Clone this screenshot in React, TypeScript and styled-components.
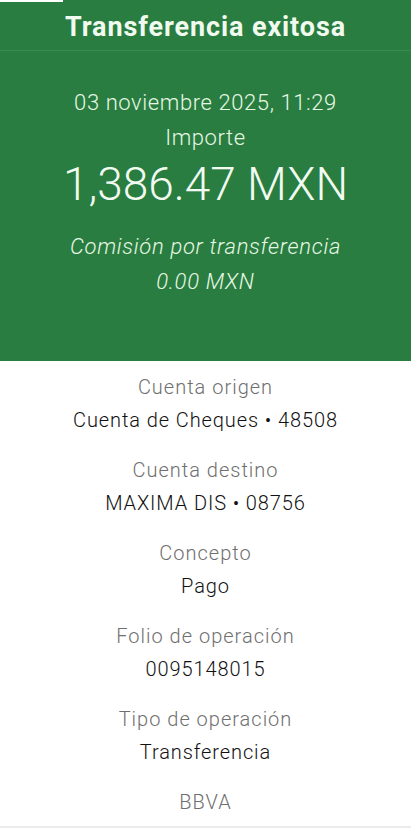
import React, { FC } from 'react';
import styled, { createGlobalStyle } from 'styled-components';

const GlobalStyle = createGlobalStyle`
  html, body {
    margin: 0;
    padding: 0;
    background: #ffffff;
  }
  body {
    font-family: 'Roboto', 'Liberation Sans', sans-serif;
  }
`;

const Screen = styled.div`
  width: 411px;
  height: 828px;
  display: flex;
  flex-direction: column;
  background: #ffffff;
  overflow: hidden;
`;

const Hero = styled.div`
  position: relative;
  display: flex;
  flex-direction: column;
  align-items: center;
  background: #2a7d40;
  color: #e6f8e4;
  padding-bottom: 62px;
`;

const StatusNub = styled.div`
  position: absolute;
  top: 0;
  left: 0;
  width: 63px;
  height: 2px;
  background: #ffffff;
`;

const TitleBar = styled.div`
  align-self: stretch;
  height: 51px;
  display: flex;
  justify-content: center;
  align-items: center;
  padding-top: 4px;
  box-sizing: border-box;
  border-bottom: 1px solid #3a8a4e;
  font-size: 27px;
  font-weight: 700;
  letter-spacing: 0.9px;
  color: #f0faef;
`;

const HeroLine = styled.div<{ $size?: number; $italic?: boolean; $height?: number; $spacing?: number }>`
  font-size: ${(p) => p.$size ?? 22}px;
  line-height: ${(p) => p.$height ?? 35}px;
  letter-spacing: ${(p) => p.$spacing ?? 0.6}px;
  font-style: ${(p) => (p.$italic ? 'italic' : 'normal')};
  font-weight: 300;
  text-align: center;
`;

const DateLine = styled(HeroLine)`
  margin-top: 34px;
`;

const Amount = styled(HeroLine)`
  color: #f2fbf1;
`;

const Fee = styled.div`
  margin-top: 15px;
  display: flex;
  flex-direction: column;
  align-items: center;
`;

const Details = styled.div`
  display: flex;
  flex-direction: column;
  align-items: center;
  padding-top: 10px;
  gap: 17px;
  flex: 1;
  border-bottom: 2px solid #ececec;
`;

const Field = styled.div`
  display: flex;
  flex-direction: column;
  align-items: center;
`;

const Label = styled.div`
  font-size: 20px;
  line-height: 33px;
  letter-spacing: 1px;
  font-weight: 300;
  color: #6f6f6f;
`;

const Value = styled.div`
  font-size: 20px;
  line-height: 33px;
  letter-spacing: 0.9px;
  font-weight: 300;
  color: #111111;
`;

const fields = [
  { label: 'Cuenta origen', value: 'Cuenta de Cheques • 48508' },
  { label: 'Cuenta destino', value: 'MAXIMA DIS • 08756' },
  { label: 'Concepto', value: 'Pago' },
  { label: 'Folio de operación', value: '0095148015' },
  { label: 'Tipo de operación', value: 'Transferencia' },
];

const App: FC = () => (
  <>
    <GlobalStyle />
    <Screen>
      <Hero>
        <StatusNub />
        <TitleBar>Transferencia exitosa</TitleBar>
        <DateLine>03 noviembre 2025, 11:29</DateLine>
        <HeroLine>Importe</HeroLine>
        <Amount $size={46} $height={59} $spacing={0}>
          1,386.47 MXN
        </Amount>
        <Fee>
          <HeroLine $italic $spacing={0.7}>Comisión por transferencia</HeroLine>
          <HeroLine $italic $spacing={0.7}>0.00 MXN</HeroLine>
        </Fee>
      </Hero>
      <Details>
        {fields.map((f) => (
          <Field key={f.label}>
            <Label>{f.label}</Label>
            <Value>{f.value}</Value>
          </Field>
        ))}
        <Field>
          <Label>BBVA</Label>
        </Field>
      </Details>
    </Screen>
  </>
);

export default App;
